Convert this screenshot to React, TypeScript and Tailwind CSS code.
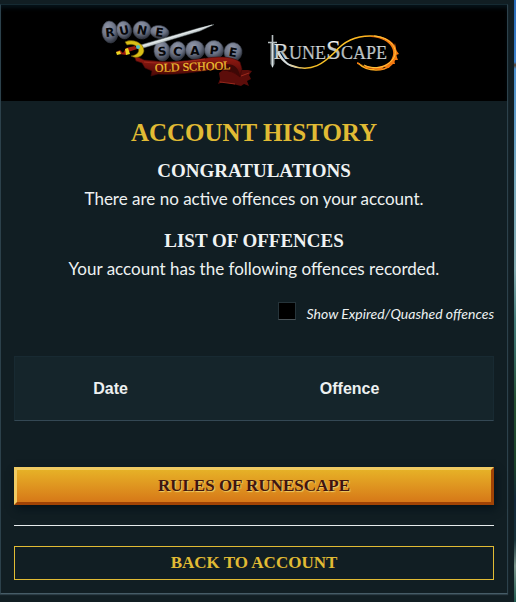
import React, { useState } from "react";

type Stone = { x: number; y: number; rx: number; ry: number; letter: string; tilt: number };

const stones: Stone[] = [
  { x: 9, y: 15, rx: 8, ry: 11, letter: "R", tilt: -6 },
  { x: 23, y: 13, rx: 7.5, ry: 9, letter: "U", tilt: -12 },
  { x: 41, y: 13, rx: 9, ry: 9, letter: "N", tilt: 12 },
  { x: 58.5, y: 15, rx: 9.5, ry: 6.5, letter: "E", tilt: 8 },
  { x: 61, y: 34, rx: 8, ry: 10, letter: "S", tilt: -6 },
  { x: 76.5, y: 34, rx: 8, ry: 9.5, letter: "C", tilt: 14 },
  { x: 94, y: 33, rx: 9.5, ry: 9.5, letter: "A", tilt: 0 },
  { x: 113, y: 33, rx: 9.5, ry: 9.5, letter: "P", tilt: 6 },
  { x: 132, y: 35, rx: 9, ry: 9.5, letter: "E", tilt: 10 },
];

function OldSchoolLogo() {
  return (
    <svg width="154" height="72" viewBox="0 0 154 72" role="img" aria-label="Old School RuneScape">
      <defs>
        <radialGradient id="stone" cx="40%" cy="30%" r="70%">
          <stop offset="0" stopColor="#9299ab" />
          <stop offset="0.6" stopColor="#6b7284" />
          <stop offset="1" stopColor="#30343f" />
        </radialGradient>
        <linearGradient id="ribbon" x1="0" y1="0" x2="0" y2="1">
          <stop offset="0" stopColor="#9a1c12" />
          <stop offset="0.5" stopColor="#74120d" />
          <stop offset="1" stopColor="#450806" />
        </linearGradient>
        <linearGradient id="gold" x1="0" y1="0" x2="0" y2="1">
          <stop offset="0" stopColor="#fff04c" />
          <stop offset="1" stopColor="#e09a18" />
        </linearGradient>
      </defs>
      {stones.map((s) => (
        <g key={s.x} transform={`rotate(${s.tilt} ${s.x} ${s.y})`}>
          <ellipse cx={s.x} cy={s.y} rx={s.rx} ry={s.ry} fill="url(#stone)" stroke="#3c414d" strokeWidth="0.6" />
          <text
            x={s.x}
            y={s.y + 4.5}
            textAnchor="middle"
            className="font-['DejaVu_Sans',sans-serif] text-[12px] font-bold"
            fill="#06070a"
          >
            {s.letter}
          </text>
        </g>
      ))}
      <path d="M118 56 L122 53 L136 56 L141 53 L147 53 L151 54 L148 58 L150 62 L146 64 L148 69 L143 67 L140 69 L132 67 L122 65 L117 67 L119 62 Z" fill="#5c0d0a" />
      <path d="M33 38 L43 43 L55 44 C72 46 90 43 106 41 C122 39 132 40 139 45 L141 52 L139 60 C132 54 122 51 108 53 C90 56 72 58 57 57 L50 59 L51 54 L44 51 L41 46 L35 44 Z" fill="url(#ribbon)" stroke="#3f0706" strokeWidth="0.6" />
      <path d="M125 47 C134 47 138 51 139 60 C133 54 126 53 118 52 Z" fill="#3d0806" />
      <path d="M119 65 L134 67 M140 59 L148 56 M43 45 C58 47 80 46 104 42" fill="none" stroke="#a52c1f" strokeWidth="0.9" />
      <text x="54" y="55" transform="rotate(-2 54 55)" className="font-['Liberation_Serif',serif] text-[12px]" fill="url(#gold)" stroke="#e8b52a" strokeWidth="0.2">
        OLD SCHOOL
      </text>
      <path d="M36 29 L98 11 L113 7.500 L99 14 L39 32 Z" fill="#ccd4d6" stroke="#656e70" strokeWidth="0.5" />
      <path d="M38 30 L111 8" stroke="#f4f8f8" strokeWidth="0.7" />
      <path d="M24 25 C32 21 43 26 43 34 C42 40 35 42 30 39 C36 38 39 35 37 31 C34 27 30 27 26 28 Z" fill="#d9bf16" stroke="#655004" strokeWidth="0.6" />
      <path d="M15 35 L19 33 L22 36 L25 31 L34 29 L36 32 L27 35 L25 38 L18 37 Z" fill="#9e1a0f" />
      <path d="M15 35 L19 34 L20 37 L16 38 Z M24 32 L27 31 L29 37 L25 38 Z" fill="#eed522" />
      <circle cx="37" cy="30" r="2" fill="#55c2c4" />
    </svg>
  );
}

function RuneScapeLogo() {
  return (
    <svg width="142" height="42" viewBox="0 0 142 42" role="img" aria-label="RuneScape">
      <defs>
        <linearGradient id="silver" x1="0" y1="8" x2="0" y2="28" gradientUnits="userSpaceOnUse">
          <stop offset="0" stopColor="#ffffff" />
          <stop offset="0.55" stopColor="#aab2b4" />
          <stop offset="1" stopColor="#d9dfe0" />
        </linearGradient>
        <linearGradient id="flame" x1="20" y1="0" x2="134" y2="0" gradientUnits="userSpaceOnUse">
          <stop offset="0" stopColor="#d8dcdb" />
          <stop offset="0.2" stopColor="#f0b824" />
          <stop offset="0.45" stopColor="#ffc928" />
          <stop offset="0.8" stopColor="#ffab1c" />
          <stop offset="1" stopColor="#f05a0a" />
        </linearGradient>
      </defs>
      <text x="8" y="26" className="font-['Liberation_Serif',serif] text-[18px]" fill="url(#silver)" stroke="#c3cacc" strokeWidth="0.2">
        <tspan className="text-[24px]">R</tspan>UNE<tspan className="text-[27px]">S</tspan>CAPE
      </text>
      <path d="M7.500 2 V10 M3 9.500 H12" stroke="#b6bec0" strokeWidth="1.600" />
      <path d="M5.500 10 H9.500 V31 L7.500 35 L5.500 31 Z" fill="#8b9598" />
      <path d="M7.500 10 V34" stroke="#eef3f3" strokeWidth="0.8" />
      <path d="M14 18 C19 28 25 34 38 35 C28 36 18 32 12 20 Z" fill="#d5dbdb" />
      <path d="M25 32 C47 41 60 29 70 19 C80 7 93 3 105 3 C121 3 131 10 131 20 C131 31 122 37 111 37 C103 37 97 34 93 30" fill="none" stroke="url(#flame)" strokeWidth="1.500" />
      <path d="M106 3 C119 3 126 8 129 14 L130 10 L131 17 L134 21 L131 22 L133 27 L129 27 L130 31 L126 31 L124 35 L119 34 L116 37 L108 36 L101 35 L98 32 L92 31 L92 29 C103 36 119 36 126 27 C133 16 123 5 106 4 Z" fill="#f47910" />
      <path d="M109 3 C125 4 135 16 128 26 C122 35 109 37 99 32" fill="none" stroke="#ffd044" strokeWidth="0.9" />
    </svg>
  );
}

const sectionTitle = "font-['Liberation_Serif',serif] text-[19px] leading-6 font-bold text-[#f0f3f3]";
const bodyCopy = "text-[17px] leading-6";

export default function App() {
  const [showExpired, setShowExpired] = useState(false);

  return (
    <div className="flex min-h-screen bg-[#111e23] font-[Lato,sans-serif] text-[#edf1f1]">
      <div className="min-w-0 flex-1 pt-1 pr-1.5 pb-2">
        <main className="border border-t-[#152a32] border-r-[#2c414b] border-b-[#465c67] border-l-[#2c414b] text-center shadow-[0_1px_1px_#2c3d45]">
          <header className="flex h-24 items-start justify-center bg-black pt-3 shadow-[inset_0_4px_4px_-1px_#06131a]">
            <OldSchoolLogo />
            <div className="pt-4 pl-2.5">
              <RuneScapeLogo />
            </div>
          </header>

          <div className="px-[13px] pb-[13px]">
            <h1 className="pt-4 font-['Liberation_Serif',serif] text-[25px] leading-8 font-bold text-[#e1bb34]">
              ACCOUNT HISTORY
            </h1>
            <section className="pt-2.5">
              <h2 className={sectionTitle}>CONGRATULATIONS</h2>
              <p className={`pt-1 ${bodyCopy}`}>There are no active offences on your account.</p>
            </section>
            <section className="pt-[18px]">
              <h2 className={sectionTitle}>LIST OF OFFENCES</h2>
              <p className={`pt-1 ${bodyCopy}`}>Your account has the following offences recorded.</p>
            </section>

            <label className="mt-5 flex items-start justify-end gap-[11px] text-[14px] leading-6 italic">
              <input
                type="checkbox"
                checked={showExpired}
                onChange={(e) => setShowExpired(e.target.checked)}
                className="mt-px size-[18px] appearance-none border border-[#26343a] border-b-[#4b5459] bg-black checked:bg-[#e1bb34]"
              />
              <span className="pt-px">Show Expired/Quashed offences</span>
            </label>

            <table className="mt-[30px] w-full table-fixed border-separate border-spacing-0 border border-[#182a32] border-b-[#344854] bg-[#15252b] font-['Liberation_Sans',sans-serif] text-[16px] leading-[23px]">
              <thead>
                <tr>
                  <th scope="col" className="w-2/5 py-5 font-bold">Date</th>
                  <th scope="col" className="py-5 font-bold">Offence</th>
                </tr>
              </thead>
            </table>

            <a
              href="#rules"
              className="mt-[46px] block border-3 border-t-[#f0cb63] border-r-[#a04305] border-b-[#a04305] border-l-[#f0cb63] bg-linear-to-b from-[#e6b127] to-[#d67818] font-['Liberation_Serif',serif] text-[17px] leading-8 font-bold text-[#401510] shadow-[2px_4px_8px_#06131a] [text-shadow:1px_1px_1px_#eed06b]"
            >
              RULES OF RUNESCAPE
            </a>
            <hr className="my-5 border-[#e6ebec]" />
            <a
              href="#account"
              className="block border border-[#e1bb34] font-['Liberation_Serif',serif] text-[17px] leading-8 font-bold text-[#e1bb34]"
            >
              BACK TO ACCOUNT
            </a>
          </div>
        </main>
      </div>
      <div
        aria-hidden="true"
        className="w-0.5 bg-[linear-gradient(to_bottom,#296bb7_0px,#3c83cf_62px,#57422f_65px,#4b91d0_69px,#77a9bd_180px,#81a9af_270px,#427b79_320px,#356b64_350px,#234e32_400px,#1a412a_465px,#12283a_500px,#173239_540px,#78938a_566px,#20594f_602px)]"
      />
    </div>
  );
}
